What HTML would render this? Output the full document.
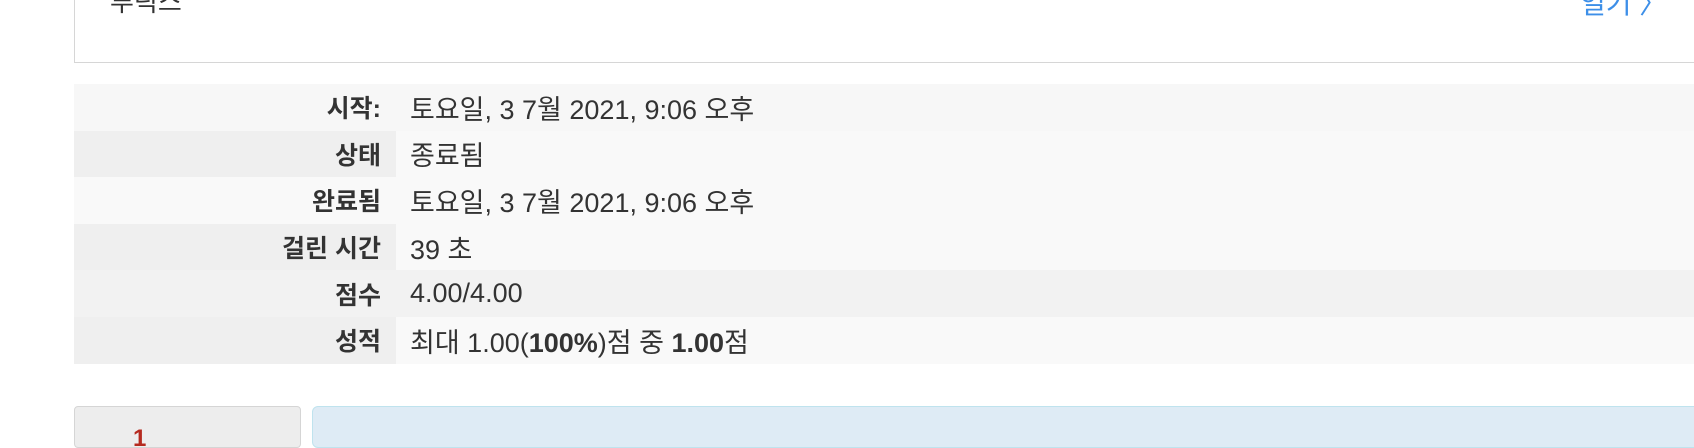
<!DOCTYPE html>
<html><head><meta charset="utf-8"><style>
html,body{margin:0;padding:0;width:1694px;height:432px;overflow:hidden;background:#fff;font-family:"Liberation Sans","Noto Sans CJK KR",sans-serif;color:#333;}
.top{position:absolute;left:74px;top:-20px;width:1640px;height:82px;border:1px solid #d6d6d6;border-top:none;background:#fff;}
.top .t{position:absolute;left:35px;top:2px;font-size:26px;color:#333;}
.top .o{position:absolute;left:1505px;top:2px;font-size:28px;color:#3d8fe8;}
table{position:absolute;left:74px;top:84px;width:1620px;border-collapse:collapse;font-size:25px;}
td{height:46.6px;padding:0;vertical-align:middle;}
td.l{width:307px;text-align:right;padding-right:15px;font-weight:bold;color:#333;}
td.v{padding-left:14px;font-size:27px;}
.r1 td{background:#f7f7f7}
.r2 td.l,.r4 td.l,.r6 td.l{background:#efefef}
.r2 td.v,.r3 td,.r4 td.v,.r6 td.v{background:#f9f9f9}
.r3 td.l{background:#f9f9f9}
.r5 td{background:#f2f2f2}
.info{position:absolute;left:74px;top:406px;width:225px;height:40px;background:#ededed;border:1px solid #d5d5d5;border-radius:4px;overflow:hidden;}
.info .n{position:absolute;left:58px;top:18px;color:#b52a1f;font-weight:bold;font-size:24px;}
.blue{position:absolute;left:312px;top:406px;width:1400px;height:40px;background:#deebf5;border:1px solid #bfe3ee;border-radius:6px;}
</style></head><body>
<div class="top"><span class="t">루릭스</span><span class="o">열기 〉</span></div>
<table>
<tr class="r1"><td class="l">시작:</td><td class="v">토요일, 3 7월 2021, 9:06 오후</td></tr>
<tr class="r2"><td class="l">상태</td><td class="v">종료됨</td></tr>
<tr class="r3"><td class="l">완료됨</td><td class="v">토요일, 3 7월 2021, 9:06 오후</td></tr>
<tr class="r4"><td class="l">걸린 시간</td><td class="v">39 초</td></tr>
<tr class="r5"><td class="l">점수</td><td class="v">4.00/4.00</td></tr>
<tr class="r6"><td class="l">성적</td><td class="v">최대 1.00(<b>100%</b>)점 중 <b>1.00</b>점</td></tr>
</table>
<div class="info"><span class="n">1</span></div>
<div class="blue"></div>
</body></html>
